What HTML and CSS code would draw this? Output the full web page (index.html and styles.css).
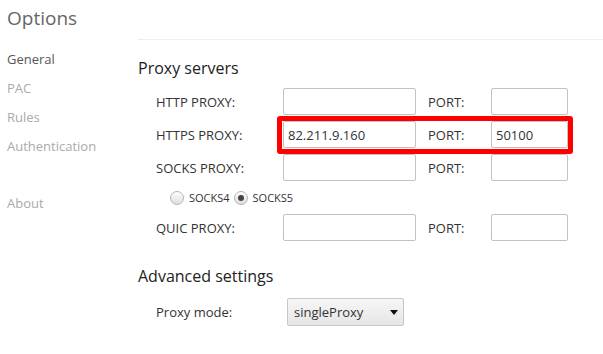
FILE: index.html
```html
<!DOCTYPE html>
<html>
<head>
    <meta charset="UTF-8">
    <title>Options</title>
    <link rel="stylesheet" href="styles.css">
</head>
<body>
    <div class="layout">
        <div class="sidebar">
            <h1>Options</h1>
            <ul class="nav">
                <li class="active">General</li>
                <li>PAC</li>
                <li>Rules</li>
                <li>Authentication</li>
                <li class="about">About</li>
            </ul>
        </div>

        <div class="main">
            <h2>Proxy servers</h2>

            <div class="row">
                <label class="label">HTTP PROXY:</label>
                <input type="text" class="host">
                <label class="port-label">PORT:</label>
                <input type="text" class="port">
            </div>
            <div class="row">
                <label class="label">HTTPS PROXY:</label>
                <input type="text" class="host" value="82.211.9.160">
                <label class="port-label">PORT:</label>
                <input type="text" class="port" value="50100">
                <div class="highlight"></div>
            </div>
            <div class="row">
                <label class="label">SOCKS PROXY:</label>
                <input type="text" class="host">
                <label class="port-label">PORT:</label>
                <input type="text" class="port">
            </div>
            <div class="socks-type">
                <label><input type="radio" name="socks"> SOCKS4</label>
                <label><input type="radio" name="socks" checked> SOCKS5</label>
            </div>
            <div class="row">
                <label class="label">QUIC PROXY:</label>
                <input type="text" class="host">
                <label class="port-label">PORT:</label>
                <input type="text" class="port">
            </div>

            <h2 class="advanced">Advanced settings</h2>

            <div class="row mode-row">
                <label class="label">Proxy mode:</label>
                <div class="select">
                    <span>singleProxy</span>
                    <span class="arrow"></span>
                </div>
            </div>
        </div>
    </div>
</body>
</html>
```

FILE: styles.css
```css
body {
    margin: 0;
    font-family: "Open Sans", "Noto Sans", sans-serif;
    font-size: 13px;
    color: #333;
    background: #fff;
}
.layout {
    display: flex;
}
.sidebar {
    width: 131px;
    padding-left: 7px;
}
.sidebar h1 {
    margin: 5px 0 0;
    font-size: 19px;
    font-weight: normal;
    line-height: 26px;
    color: #666;
}
.nav {
    list-style: none;
    margin: 14px 0 0;
    padding: 0;
}
.nav li {
    line-height: 29px;
    color: #aaa;
}
.nav li.active {
    color: #555;
}
.nav li.about {
    margin-top: 28px;
}
.main {
    flex: 1;
    margin-top: 39px;
    border-top: 1px solid #eee;
}
.main h2 {
    margin: 18px 0 10px;
    font-size: 16px;
    font-weight: normal;
    line-height: 20px;
    color: #222;
}
.row {
    position: relative;
    display: flex;
    align-items: center;
    height: 27px;
    margin: 0 0 6px 18px;
}
.label {
    width: 127px;
}
.port-label {
    width: 63px;
    margin-left: 12px;
}
input[type="text"] {
    box-sizing: border-box;
    height: 27px;
    margin: 0;
    padding: 0 4px;
    border: 1px solid #c2c2c2;
    border-radius: 2px;
    font-family: inherit;
    font-size: 13px;
    color: #333;
}
.host {
    width: 133px;
}
.port {
    width: 77px;
}
.highlight {
    position: absolute;
    left: 121px;
    top: -5px;
    width: 286px;
    height: 28px;
    border: 5px solid #f00;
    border-radius: 3px;
}
.socks-type {
    display: flex;
    align-items: center;
    height: 21px;
    margin: 0 0 6px 32px;
    font-size: 11px;
}
.socks-type label {
    display: flex;
    align-items: center;
    margin-right: 4px;
}
.socks-type input {
    appearance: none;
    position: relative;
    width: 14px;
    height: 14px;
    margin: 0 5px 0 0;
    border: 1px solid #b5b5b5;
    border-radius: 50%;
    background: linear-gradient(#fdfdfd, #dedede);
}
.socks-type input:checked::after {
    content: "";
    position: absolute;
    left: 3px;
    top: 3px;
    width: 6px;
    height: 6px;
    border-radius: 50%;
    background: #444;
}
.main h2.advanced {
    margin: 25px 0 12px;
}
.mode-row {
    height: 28px;
}
.mode-row .label {
    width: 131px;
}
.select {
    box-sizing: border-box;
    display: flex;
    align-items: center;
    justify-content: space-between;
    width: 117px;
    height: 28px;
    padding: 0 5px 0 6px;
    border: 1px solid #c6c6c6;
    border-radius: 2px;
    background: linear-gradient(#f6f6f6, #e6e6e6);
    color: #333;
}
.arrow {
    width: 0;
    height: 0;
    border-left: 4px solid transparent;
    border-right: 4px solid transparent;
    border-top: 5px solid #111;
}
```
